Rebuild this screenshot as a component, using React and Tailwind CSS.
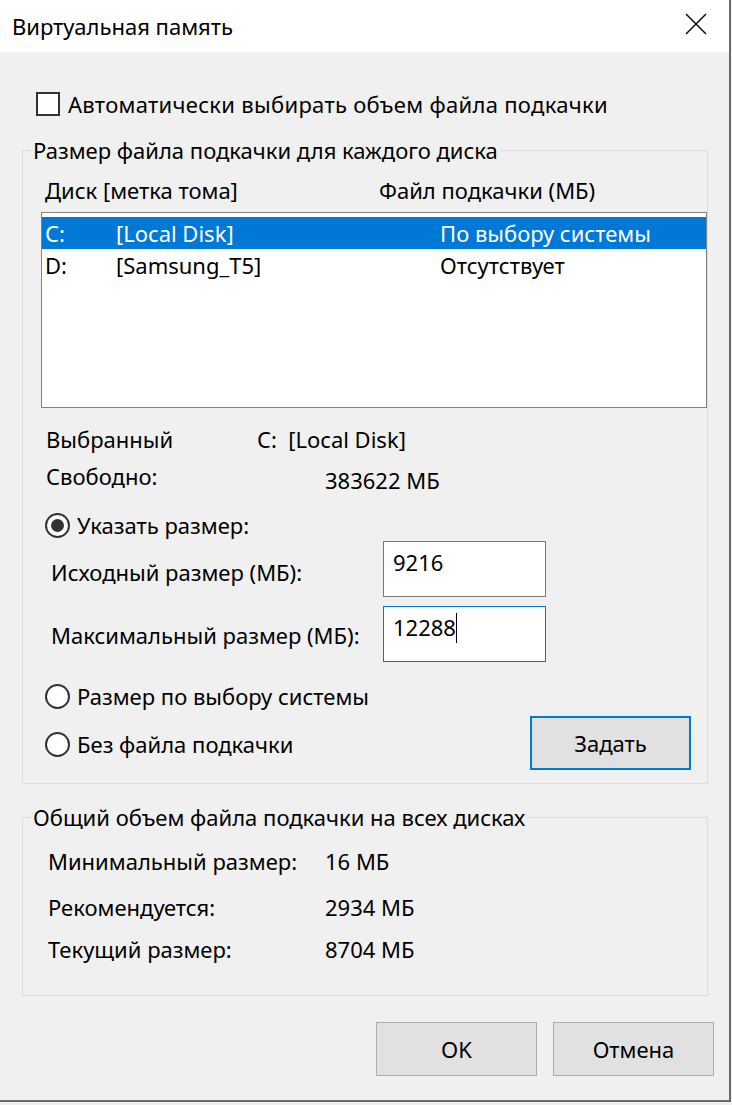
import React from 'react';

const font = { fontFamily: '"Noto Sans", "Open Sans", Arial, sans-serif' };

function Radio({ checked, label }) {
    return (
        <div className="flex items-center h-[30px]">
            <span className="w-[25px] h-[25px] rounded-full border-2 border-[#333] bg-white flex items-center justify-center">
                {checked && <span className="w-[13px] h-[13px] rounded-full bg-[#333]" />}
            </span>
            <span className="ml-[7px]">{label}</span>
        </div>
    );
}

function WinButton({ children, focused, className = '' }) {
    return (
        <button
            className={
                'h-[54px] w-[161px] bg-[#e1e1e1] flex items-center justify-center ' +
                (focused ? 'border-2 border-[#0078d7] ' : 'border border-[#adadad] ') +
                className
            }
        >
            {children}
        </button>
    );
}

export default function App() {
    return (
        <div className="w-[732px] h-[1105px] bg-[#f0f0f0] text-[22px] text-black" style={font}>
            <div className="w-[731px] h-[1102px] flex flex-col border-r-2 border-b-2 border-[#6b6b6b]">
                {/* Title bar */}
                <div className="h-[52px] bg-white flex items-center justify-between pl-[12px] pr-[22px] shrink-0">
                    <span className="leading-[30px]">Виртуальная память</span>
                    <svg width="22" height="22" viewBox="0 0 22 22" className="mt-[-4px]">
                        <path d="M1 1L21 21M21 1L1 21" stroke="#111" strokeWidth="1.6" />
                    </svg>
                </div>

                {/* Auto checkbox */}
                <div className="flex items-center h-[30px] mt-[37px] pl-[36px]">
                    <span className="w-[24px] h-[24px] border-2 border-[#333] bg-white" />
                    <span className="ml-[8px] tracking-[0.3px]">Автоматически выбирать объем файла подкачки</span>
                </div>

                {/* Per-disk group */}
                <fieldset className="mt-[16px] ml-[22px] w-[686px] border border-[#dcdcdc] pl-[22px] pb-[13px]">
                    <legend className="ml-[-14px] px-[2px] leading-[30px]">Размер файла подкачки для каждого диска</legend>

                    <div className="flex h-[30px] items-center mt-[10px]">
                        <span className="w-[334px]">Диск [метка тома]</span>
                        <span>Файл подкачки (МБ)</span>
                    </div>

                    <div className="ml-[-4px] mt-[7px] w-[666px] h-[196px] border border-[#828282] bg-white pt-[4px]">
                        <div className="flex h-[32px] items-center bg-[#0078d7] text-white">
                            <span className="pl-[3px] w-[74px]">C:</span>
                            <span className="w-[324px]">[Local Disk]</span>
                            <span>По выбору системы</span>
                        </div>
                        <div className="flex h-[32px] items-center">
                            <span className="pl-[3px] w-[74px]">D:</span>
                            <span className="w-[324px]">[Samsung_T5]</span>
                            <span>Отсутствует</span>
                        </div>
                    </div>

                    <div className="flex h-[30px] items-center mt-[16px] pl-[1px]">
                        <span className="w-[211px]">Выбранный</span>
                        <span>C:&nbsp;&nbsp;[Local Disk]</span>
                    </div>
                    <div className="flex h-[30px] items-center mt-[7px] pl-[1px]">
                        <span className="w-[279px]">Свободно:</span>
                        <span className="pt-[8px]">383622 МБ</span>
                    </div>

                    <div className="mt-[19px]">
                        <Radio checked label="Указать размер:" />
                    </div>

                    <div className="flex items-center mt-[1px]">
                        <span className="w-[338px] pl-[6px] pt-[7px]">Исходный размер (МБ):</span>
                        <div className="w-[163px] h-[56px] border border-[#7a7a7a] bg-white pl-[9px] leading-[40px]">9216</div>
                    </div>
                    <div className="flex items-center mt-[9px]">
                        <span className="w-[338px] pl-[6px] pt-[3px]">Максимальный размер (МБ):</span>
                        <div className="w-[163px] h-[56px] border border-[#0078d7] bg-white pl-[9px] leading-[40px] flex items-start">
                            <span>12288</span>
                            <span className="w-px h-[30px] bg-black mt-[6px]" />
                        </div>
                    </div>

                    <div className="mt-[19px]">
                        <Radio label="Размер по выбору системы" />
                    </div>
                    <div className="flex items-center justify-between mt-[5px] pr-[16px]">
                        <div className="pt-[2px]">
                            <Radio label="Без файла подкачки" />
                        </div>
                        <WinButton focused>Задать</WinButton>
                    </div>
                </fieldset>

                {/* Totals group */}
                <fieldset className="mt-[18px] ml-[22px] w-[686px] border border-[#dcdcdc] pl-[25px] pb-[31px]">
                    <legend className="ml-[-17px] px-[2px] leading-[30px]">Общий объем файла подкачки на всех дисках</legend>
                    <div className="flex h-[30px] items-center mt-[14px]">
                        <span className="w-[277px]">Минимальный размер:</span>
                        <span>16 МБ</span>
                    </div>
                    <div className="flex h-[30px] items-center mt-[16px]">
                        <span className="w-[277px]">Рекомендуется:</span>
                        <span>2934 МБ</span>
                    </div>
                    <div className="flex h-[30px] items-center mt-[12px]">
                        <span className="w-[277px]">Текущий размер:</span>
                        <span>8704 МБ</span>
                    </div>
                </fieldset>

                {/* Footer buttons */}
                <div className="flex justify-end gap-[16px] mt-[26px] pr-[15px]">
                    <WinButton>OK</WinButton>
                    <WinButton>Отмена</WinButton>
                </div>
            </div>
        </div>
    );
}
